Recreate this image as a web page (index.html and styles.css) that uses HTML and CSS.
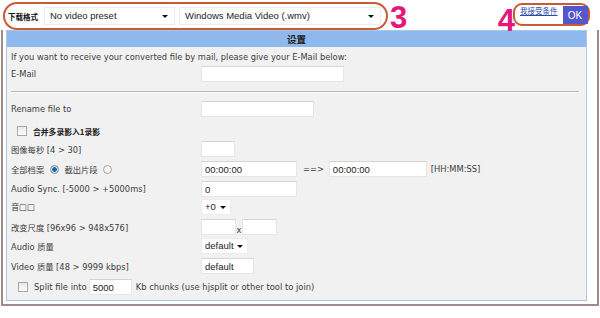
FILE: index.html
```html
<!DOCTYPE html>
<html>
<head>
    <title>转换设置</title>
    <meta charset="utf-8">
    <link rel="stylesheet" href="styles.css">
</head>
<body>
    <div class="toolbar">
        <div class="format-group">
            <span class="format-label">下载格式</span>
            <div class="select preset">No video preset<span class="caret"></span></div>
            <div class="select codec">Windows Media Video (.wmv)<span class="caret"></span></div>
        </div>
        <span class="step step-3">3</span>
        <span class="step step-4">4</span>
        <div class="action-group">
            <a class="terms" href="#">我接受条件</a>
            <button class="ok-button">OK</button>
        </div>
    </div>

    <div class="frame">
        <div class="panel">
            <div class="panel-title">设置</div>
            <div class="panel-body">
                <p class="intro">If you want to receive your converted file by mail, please give your E-Mail below:</p>
                <div class="row row-email">
                    <span class="label">E-Mail</span>
                    <input class="field w-email" type="text">
                </div>
                <hr class="divider">
                <div class="row row-rename">
                    <span class="label">Rename file to</span>
                    <input class="field w-rename" type="text">
                </div>
                <div class="row row-merge">
                    <span class="checkbox"></span>
                    <span class="merge-label">合并多录影入1录影</span>
                </div>
                <div class="row row-fps">
                    <span class="label">图像每秒 [4 &gt; 30]</span>
                    <input class="field w-fps" type="text">
                </div>
                <div class="row gap-4">
                    <span class="label">
                        全部档案 <span class="radio checked"></span>
                        截出片段 <span class="radio"></span>
                    </span>
                    <input class="field w-time" type="text" value="00:00:00">
                    <span class="arrow">==&gt;</span>
                    <input class="field w-time2" type="text" value="00:00:00">
                    <span class="hint">[HH:MM:SS]</span>
                </div>
                <div class="row gap-4">
                    <span class="label">Audio Sync. [-5000 &gt; +5000ms]</span>
                    <input class="field w-time" type="text" value="0">
                </div>
                <div class="row gap-2">
                    <span class="label label-volume">音□□</span>
                    <div class="select small w-volume">+0<span class="caret"></span></div>
                </div>
                <div class="row gap-4">
                    <span class="label">改变尺度 [96x96 &gt; 948x576]</span>
                    <input class="field w-size" type="text">
                    <span class="times">x</span>
                    <input class="field w-size" type="text">
                </div>
                <div class="row gap-3">
                    <span class="label">Audio 质量</span>
                    <div class="select small w-quality">default<span class="caret"></span></div>
                </div>
                <div class="row gap-4">
                    <span class="label">Video 质量 [48 &gt; 9999 kbps]</span>
                    <input class="field w-video" type="text" value="default">
                </div>
                <div class="row row-split">
                    <span class="checkbox"></span>
                    <span class="split-text">Split file into</span>
                    <input class="field w-split" type="text" value="5000">
                    <span class="split-text">Kb chunks (use hjsplit or other tool to join)</span>
                </div>
            </div>
        </div>
    </div>
</body>
</html>
```

FILE: styles.css
```css
body {
    margin: 0;
    background: #ffffff;
    font-family: "DejaVu Sans", "Noto Sans CJK SC", sans-serif;
    font-size: 8.3px;
    color: #3c3c3c;
}

/* top bar */
.toolbar {
    display: flex;
    align-items: flex-start;
    height: 30px;
}

.format-group {
    display: flex;
    align-items: center;
    gap: 4px;
    box-sizing: border-box;
    width: 385px;
    height: 28px;
    margin: 2px 0 0 3px;
    padding-left: 3px;
    border: 2px solid #c85a34;
    border-radius: 14px;
}

.format-label {
    width: 32px;
    font-family: "Noto Sans CJK SC", sans-serif;
    font-size: 7.5px;
    font-weight: 700;
    color: #111;
}

.select {
    position: relative;
    box-sizing: border-box;
    height: 18px;
    padding: 0 12px 0 5px;
    background: #fff;
    border: 1px solid #ececec;
    font-family: "Liberation Sans", sans-serif;
    font-size: 9.5px;
    line-height: 16px;
    color: #222;
}

.preset { width: 131px; }
.codec { width: 202px; }

.caret {
    position: absolute;
    right: 6px;
    top: 7px;
    border-left: 3px solid transparent;
    border-right: 3px solid transparent;
    border-top: 3px solid #111;
}

.step {
    font-family: "Liberation Sans", sans-serif;
    font-weight: 700;
    font-size: 31px;
    line-height: 35px;
    color: #e3187d;
}

.step-3 {
    margin: 0 0 0 2px;
}

.step-4 {
    margin: 3px 0 0 auto;
}

.action-group {
    display: flex;
    align-items: flex-start;
    gap: 5px;
    box-sizing: border-box;
    width: 77px;
    height: 23px;
    margin: 3px 10px 0 -2px;
    padding: 1px 0 0 5px;
    border: 2px solid #c85a34;
    border-radius: 9px;
}

.terms {
    margin-top: -1px;
    font-family: "Noto Sans CJK SC", sans-serif;
    font-size: 7.5px;
    color: #2a4aa8;
}

.ok-button {
    width: 25px;
    height: 18px;
    padding: 0;
    border: none;
    background: #5656cc;
    color: #fff;
    font-family: "Liberation Sans", sans-serif;
    font-size: 10px;
}

/* settings panel */
.frame {
    box-sizing: border-box;
    width: 598px;
    margin-left: 1px;
    padding: 0 10px 3px 3px;
    border: 2px solid #9e8c8a;
    border-top: none;
}

.panel {
    border: 1px solid #a9c7e6;
    background: #f1f1f1;
}

.panel-title {
    height: 16px;
    background: #8fb8ec;
    text-align: center;
    font-family: "Noto Sans CJK SC", sans-serif;
    font-size: 9.5px;
    font-weight: 700;
    line-height: 16px;
    color: #1a1a1a;
}

.panel-body {
    padding: 3px 4px 5px 4px;
}

.intro {
    margin: 0;
    line-height: 14px;
}

.row {
    display: flex;
    align-items: center;
    height: 16px;
}

.row-email { margin-top: 2px; }
.row-rename { margin-top: 8px; }
.row-merge { margin-top: 6px; padding-left: 6px; }
.row-fps { margin-top: 2px; }
.row-split { margin-top: 5px; padding-left: 7px; }

.gap-2 { margin-top: 2px; }
.gap-3 { margin-top: 3px; }
.gap-4 { margin-top: 4px; }

.label {
    flex-shrink: 0;
    width: 190px;
}

.label-volume {
    margin-top: -3px;
}

.divider {
    margin: 9px 3px 0 0;
    border: none;
    border-top: 1px solid #b9b9b9;
    border-bottom: 1px solid #fbfbfb;
}

.field {
    box-sizing: border-box;
    height: 16px;
    margin: 0;
    padding: 0 3px;
    background: #fff;
    border: 1px solid #e6e6e6;
    border-top-color: #d4d4d4;
    font-family: "Liberation Sans", sans-serif;
    font-size: 9.5px;
    color: #222;
}

.w-email { width: 143px; }
.w-rename { width: 113px; }
.w-fps { width: 34px; }
.w-time { width: 96px; }
.w-time2 { width: 98px; }
.w-size { width: 35px; }
.w-video { width: 53px; }
.w-split { width: 43px; margin: 0 4px 0 2px; }

.select.small {
    height: 16px;
    line-height: 14px;
    padding-left: 3px;
}

.select.small .caret {
    top: 6px;
    right: 4px;
}

.w-volume { width: 30px; }
.w-quality { width: 47px; }

.arrow {
    margin: 0 5px 0 6px;
}

.hint {
    margin-left: 4px;
}

.times {
    width: 6px;
    margin-top: 6px;
    text-align: center;
}

.checkbox {
    box-sizing: border-box;
    width: 10px;
    height: 10px;
    margin-right: 6px;
    border: 1px solid #a9a9a9;
    background: linear-gradient(#e8e8e8, #fdfdfd);
}

.merge-label {
    font-family: "Noto Sans CJK SC", sans-serif;
    font-size: 7.8px;
    font-weight: 700;
    color: #1c1c1c;
}

.radio {
    display: inline-block;
    box-sizing: border-box;
    width: 9px;
    height: 9px;
    margin: 0 3px;
    vertical-align: -1px;
    border: 1px solid #a3a3a3;
    border-radius: 50%;
    background: #f6f6f6;
}

.radio.checked {
    border-color: #7d93b4;
    background: radial-gradient(circle, #2f5f9c 0 2px, #cfe0f2 2.5px);
}

.split-text {
    font-size: 8.4px;
}
```
